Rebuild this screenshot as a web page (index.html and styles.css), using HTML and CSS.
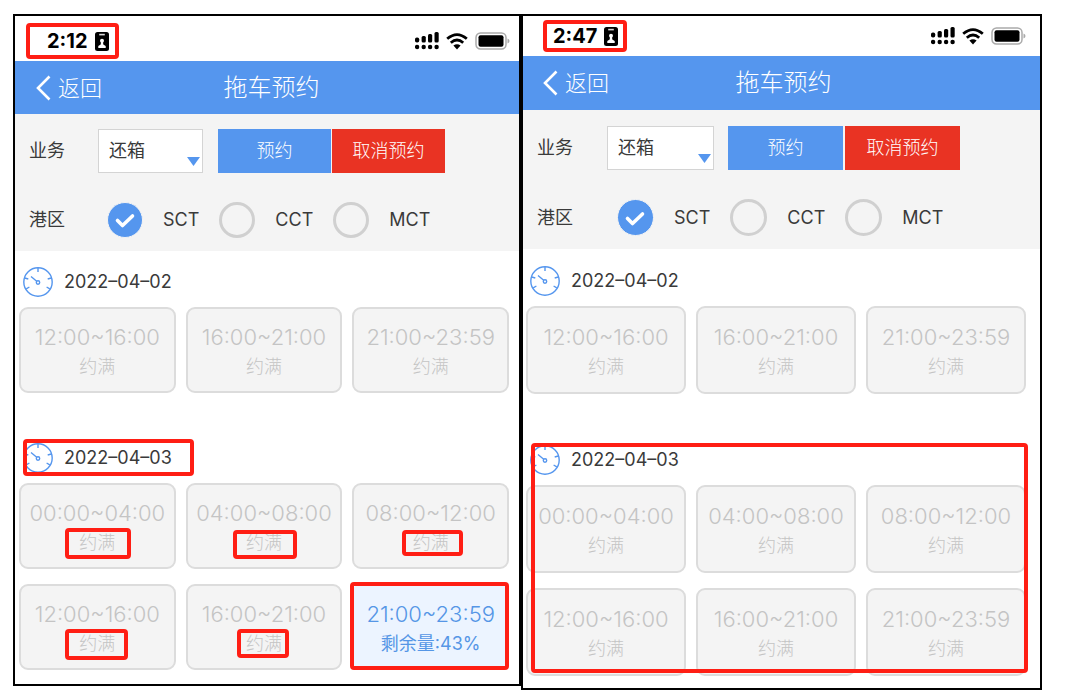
FILE: index.html
```html
<!DOCTYPE html>
<html lang="zh-CN">
<head>
<meta charset="utf-8">
<meta name="viewport" content="width=device-width, initial-scale=1">
<title>拖车预约</title>
<link rel="stylesheet" href="styles.css">
</head>
<body>
<svg class="defs" aria-hidden="true">
  <symbol id="badge" viewBox="0 0 14 19"><rect width="14" height="19" rx="2.5" fill="#000"/><path d="M4.2 1.8h5.6v1.6H4.2z" fill="#fff" opacity=".85"/><circle cx="7" cy="8.8" r="2" fill="#fff"/><path d="M6 10h2l.3 2.500 2.400 1.400V16H3.300v-2.100l2.400-1.400z" fill="#fff"/></symbol>
  <symbol id="signal" viewBox="0 0 24 18"><g fill="#000"><rect y="5.500" width="4.200" height="5" rx="1.800"/><rect x="6.600" y="4" width="4.200" height="6.500" rx="1.500"/><rect x="13" y="2" width="4.200" height="8.500" rx="1.500"/><rect x="19.500" y="0" width="4.200" height="10.500" rx="1.500"/><circle cx="2.100" cy="15" r="2.200"/><circle cx="8.700" cy="15" r="2.200"/><circle cx="15.100" cy="15" r="2.200"/><circle cx="21.600" cy="15" r="2.200"/></g></symbol>
  <symbol id="wifi" viewBox="0 0 22 17"><g fill="none" stroke="#000" stroke-width="2.800"><path d="M1.200 5.800Q11-2.600 20.800 5.800"/><path d="M4.800 9.700Q11 4.200 17.200 9.700"/></g><path d="M7.400 12.600Q11 9.800 14.600 12.600L11 16.500z" fill="#000"/></symbol>
  <symbol id="battery" viewBox="0 0 35 18"><rect x="1" y="1" width="30" height="16" rx="4.500" fill="#fff" stroke="#aaa" stroke-width="1.500"/><rect x="3.500" y="3.300" width="25" height="11.400" rx="2" fill="#000"/><path d="M32.500 6.500q2 .8 2 2.500t-2 2.500z" fill="#aaa"/></symbol>
  <symbol id="back" viewBox="0 0 15 26"><path d="M13.500 1.500L2 13l11.500 11.500" fill="none" stroke="#fff" stroke-width="2.600"/></symbol>
  <symbol id="tick" viewBox="0 0 36 36"><path d="M10.500 18.500l5 5 10-9.500" fill="none" stroke="#fff" stroke-width="3.600" stroke-linecap="round" stroke-linejoin="round"/></symbol>
  <symbol id="dial" viewBox="0 0 30 30"><g fill="none" stroke="#5596ee" stroke-width="1.400"><circle cx="15" cy="15" r="14.200"/><circle cx="15" cy="15.500" r="1.700"/><path d="M13.700 14.200L8 9.500M15 1v4M1.700 11l3.600 1M28.300 11l-3.600 1M3.200 21.800l3.200-1.800M26.800 21.800l-3.200-1.800"/></g></symbol>
</svg>
<main class="screens">
  <section class="phone early">
    <div class="status"><span class="clock">2:12</span><svg class="badge"><use href="#badge"/></svg><svg class="signal"><use href="#signal"/></svg><svg class="wifi"><use href="#wifi"/></svg><svg class="battery"><use href="#battery"/></svg><i class="mark m-clock"></i></div>
    <header class="bar"><a class="back" href="#"><svg><use href="#back"/></svg>返回</a><h1>拖车预约</h1></header>
    <form class="controls">
      <div class="line"><label class="name" for="b1">业务</label><span class="pick"><select id="b1"><option>还箱</option></select></span><span class="actions"><button type="button">预约</button><button type="button" class="cancel">取消预约</button></span></div>
      <div class="line ports"><span class="name">港区</span>
        <label class="port"><input type="radio" name="p1" checked><svg><use href="#tick"/></svg>SCT</label>
        <label class="port"><input type="radio" name="p1">CCT</label>
        <label class="port"><input type="radio" name="p1">MCT</label></div>
    </form>
    <div class="days">
      <section class="day"><h2><svg><use href="#dial"/></svg>2022–04–02</h2>
        <div class="slots">
          <button class="slot" disabled><span>12:00~16:00</span><small>约满</small></button>
          <button class="slot" disabled><span>16:00~21:00</span><small>约满</small></button>
          <button class="slot" disabled><span>21:00~23:59</span><small>约满</small></button>
        </div></section>
      <section class="day"><h2><svg><use href="#dial"/></svg>2022–04–03<i class="mark m-date"></i></h2>
        <div class="slots">
          <button class="slot" disabled><span>00:00~04:00</span><small>约满</small><i class="mark m-a"></i></button>
          <button class="slot" disabled><span>04:00~08:00</span><small>约满</small><i class="mark m-b"></i></button>
          <button class="slot" disabled><span>08:00~12:00</span><small>约满</small><i class="mark m-c"></i></button>
          <button class="slot" disabled><span>12:00~16:00</span><small>约满</small><i class="mark m-d"></i></button>
          <button class="slot" disabled><span>16:00~21:00</span><small>约满</small><i class="mark m-e"></i></button>
          <button class="slot open"><span>21:00~23:59</span><small>剩余量:43%</small><i class="mark m-open"></i></button>
        </div></section>
    </div>
  </section>
  <section class="phone late">
    <div class="status"><span class="clock">2:47</span><svg class="badge"><use href="#badge"/></svg><svg class="signal"><use href="#signal"/></svg><svg class="wifi"><use href="#wifi"/></svg><svg class="battery"><use href="#battery"/></svg><i class="mark m-clock"></i></div>
    <header class="bar"><a class="back" href="#"><svg><use href="#back"/></svg>返回</a><h1>拖车预约</h1></header>
    <form class="controls">
      <div class="line"><label class="name" for="b2">业务</label><span class="pick"><select id="b2"><option>还箱</option></select></span><span class="actions"><button type="button">预约</button><button type="button" class="cancel">取消预约</button></span></div>
      <div class="line ports"><span class="name">港区</span>
        <label class="port"><input type="radio" name="p2" checked><svg><use href="#tick"/></svg>SCT</label>
        <label class="port"><input type="radio" name="p2">CCT</label>
        <label class="port"><input type="radio" name="p2">MCT</label></div>
    </form>
    <div class="days">
      <section class="day"><h2><svg><use href="#dial"/></svg>2022–04–02</h2>
        <div class="slots">
          <button class="slot" disabled><span>12:00~16:00</span><small>约满</small></button>
          <button class="slot" disabled><span>16:00~21:00</span><small>约满</small></button>
          <button class="slot" disabled><span>21:00~23:59</span><small>约满</small></button>
        </div></section>
      <section class="day"><h2><svg><use href="#dial"/></svg>2022–04–03</h2>
        <div class="slots">
          <button class="slot" disabled><span>00:00~04:00</span><small>约满</small></button>
          <button class="slot" disabled><span>04:00~08:00</span><small>约满</small></button>
          <button class="slot" disabled><span>08:00~12:00</span><small>约满</small></button>
          <button class="slot" disabled><span>12:00~16:00</span><small>约满</small></button>
          <button class="slot" disabled><span>16:00~21:00</span><small>约满</small></button>
          <button class="slot" disabled><span>21:00~23:59</span><small>约满</small></button>
        </div><i class="mark m-day"></i></section>
    </div>
  </section>
</main>
</body>
</html>
```
FILE: styles.css
```css
* { box-sizing: border-box; }
body {
  margin: 0;
  background: #fff;
  color: #3a3a3a;
  font: 400 18px/30px Inter, "Noto Sans CJK SC", sans-serif;
}
button, select, input { font: inherit; color: inherit; margin: 0; padding: 0; }
h1, h2 { margin: 0; font-weight: inherit; }
.defs { position: absolute; width: 0; height: 0; }

.screens {
  display: grid;
  grid-template-columns: 508fr 521fr;
  align-items: start;
  padding: 14px 36px 8px 13px;
}
.phone { border: 2px solid #000; background: #fff; min-width: 0; }

.status { position: relative; display: flex; align-items: center; }
.clock { color: #000; font-size: 20px; font-weight: 700; }
.badge { width: 14px; height: 19px; margin-left: 7px; }
.signal { width: 24px; height: 18px; margin-left: auto; }
.wifi { width: 22px; height: 17px; margin: 0 7px; }
.battery { width: 35px; height: 18px; }
.early .status { height: 45px; padding: 5px 9px 0 32px; }
.late .status { height: 40px; padding: 0 14px 0 30px; }

.bar {
  display: grid;
  grid-template-columns: 1fr auto 1fr;
  align-items: center;
  height: 54px;
  background: #5596ee;
  color: #fff;
  font-weight: 300;
}
.early .bar { height: 53px; padding: 0 12px 0 21px; }
.late .bar { padding: 0 16px 0 20px; }
.back { display: flex; align-items: center; gap: 7px; color: #fff; font-size: 22px; text-decoration: none; }
.back svg { width: 15px; height: 26px; }
.bar h1 { font-size: 24px; }

.controls { display: grid; gap: 29px; background: #f4f4f4; }
.early .controls { padding: 15px 14px 13px; }
.late .controls { padding: 16px 14px 13px; }
.line { display: flex; align-items: center; }
.name { width: 69px; }
.late .name { width: 70px; }
.pick { position: relative; width: 105px; height: 44px; margin-right: 15px; }
.late .pick { width: 107px; margin-right: 14px; }
.pick::after {
  content: "";
  position: absolute;
  right: 3px;
  bottom: 7px;
  width: 13px;
  height: 9px;
  background: #5596ee;
  clip-path: polygon(0 0, 100% 0, 50% 100%);
  pointer-events: none;
}
.pick select {
  appearance: none;
  width: 100%;
  height: 100%;
  padding-left: 10px;
  border: 1px solid #d4d4d4;
  border-radius: 0;
  background: #fff;
}
.actions { display: grid; grid-template-columns: 113px 113px; gap: 1px; }
.late .actions { grid-template-columns: 115px 115px; gap: 2px; }
.actions button { height: 44px; border: 0; background: #5596ee; color: #fff; font-weight: 300; }
.actions .cancel { background: #e93323; }

.ports { gap: 20px; }
.ports .name { width: 58px; }
.early .ports .name { width: 58px; }
.late .ports .name { width: 60px; }
.port { position: relative; display: flex; align-items: center; gap: 20px; }
.port input {
  appearance: none;
  width: 36px;
  height: 36px;
  border: 3px solid #d0d0d0;
  border-radius: 50%;
}
.late .port input { width: 37px; height: 37px; }
.port input:checked { border: 1px solid #f4f4f4; background: #5596ee; }
.port svg { position: absolute; left: 0; width: 36px; height: 36px; pointer-events: none; }

.days { display: grid; }
.early .days { gap: 50px; padding: 16px 10px 14px 4px; }
.late .days { gap: 51px; padding: 17px 14px 12px 3px; }
.day { position: relative; display: grid; gap: 10px; }
.day h2 { position: relative; display: flex; align-items: center; gap: 11px; padding-left: 4px; font-size: 18px; }
.day h2 svg { width: 30px; height: 30px; }
.slots { display: grid; grid-template-columns: repeat(3, 1fr); gap: 15px 10px; }
.slot {
  position: relative;
  display: flex;
  flex-direction: column;
  align-items: center;
  justify-content: center;
  min-height: 86px;
  padding-top: 4px;
  border: 2px solid #dcdcdc;
  border-radius: 9px;
  background: #f4f4f4;
  color: #c4c4c4;
  font-weight: 300;
}
.late .slot { min-height: 88px; }
.slot span { font-size: 22px; }
.slot small { font-size: 18px; }
.slot.open { border-color: transparent; background: #ecf4ff; color: #5596e6; }
.slot.open small { font-weight: 400; }

.mark { position: absolute; border: 4px solid #ff1e14; border-radius: 4px; pointer-events: none; }
.early .m-clock { left: 11px; top: 7px; width: 93px; height: 36px; }
.late .m-clock { left: 20px; top: 4px; width: 84px; height: 32px; }
.m-date { left: 4px; top: -4px; width: 171px; height: 37px; }
.m-a { left: 44px; top: 43px; width: 66px; height: 31px; }
.m-b { left: 45px; top: 45px; width: 64px; height: 29px; }
.m-c { left: 48px; top: 45px; width: 61px; height: 26px; }
.m-d { left: 44px; top: 43px; width: 63px; height: 31px; }
.m-e { left: 49px; top: 43px; width: 52px; height: 29px; }
.m-open { inset: -4px -2px -2px -4px; }
.m-day { inset: -2px -2px 3px 5px; }
```
